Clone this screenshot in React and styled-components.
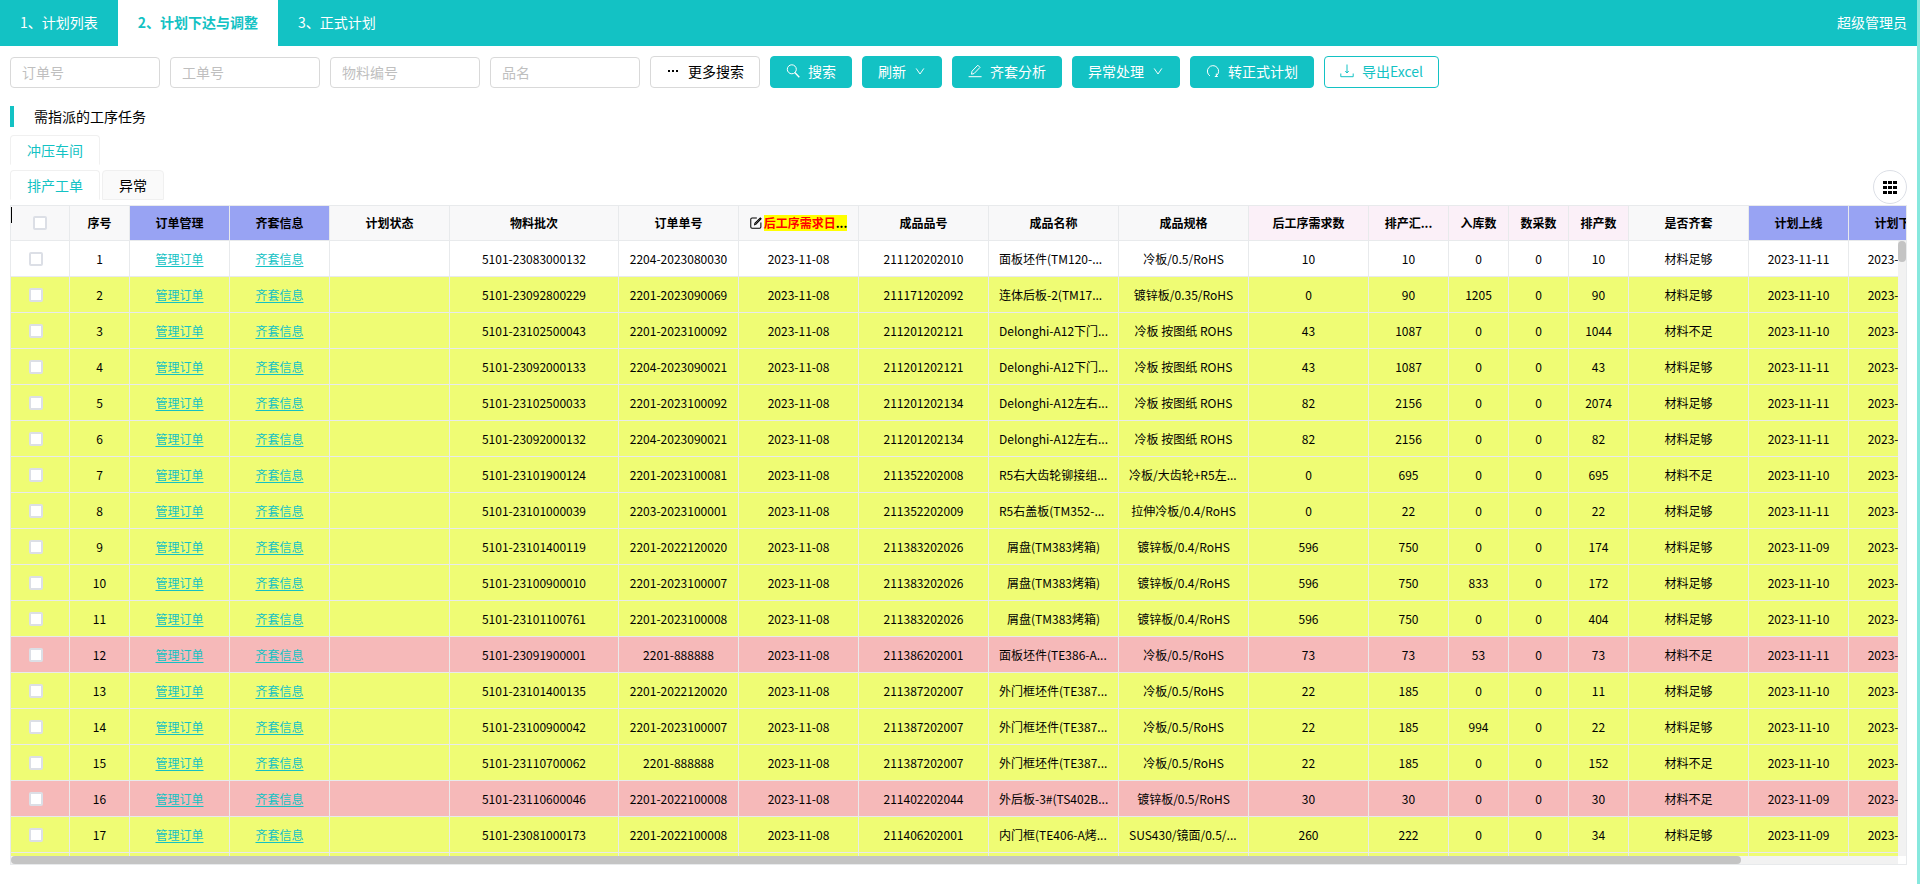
import React from 'react';
import styled, { createGlobalStyle, css } from 'styled-components';

const TEAL = '#13c2c4';
const LINE = '#e8eaec';

const GlobalStyle = createGlobalStyle`
  * { box-sizing: border-box; }
  body {
    margin: 0;
    background: #fff;
    color: #000;
    font: 14px/22px 'Noto Sans CJK SC', 'Noto Sans', sans-serif;
  }
  button, input { font: inherit; color: inherit; }
`;

const Page = styled.div`
  min-height: 100vh;
  border-right: 3px solid #87e8de;
`;

const TopBar = styled.header`
  display: flex;
  justify-content: space-between;
  align-items: center;
  height: 46px;
  padding-right: 10px;
  background: ${TEAL};
  color: #fff;
`;

const TopNav = styled.nav`
  display: flex;
  align-self: stretch;
`;

const UserName = styled.span`
  padding-bottom: 2px;
`;

const NavLink = styled.a`
  display: flex;
  align-items: center;
  padding: 0 20px 2px;
  text-decoration: none;
  color: ${(p) => (p.$active ? TEAL : '#fff')};
  background: ${(p) => (p.$active ? '#fff' : 'transparent')};
  font-weight: ${(p) => (p.$active ? 700 : 400)};
`;

const Content = styled.main`
  padding: 10px;
`;

const Toolbar = styled.form`
  display: flex;
  align-items: flex-end;
  gap: 10px;
`;

const Field = styled.input`
  width: 150px;
  height: 31px;
  padding: 0 11px 2px;
  border: 1px solid #d9d9d9;
  border-radius: 4px;
  outline: none;
  &::placeholder { color: #bfbfbf; opacity: 1; }
`;

const looks = {
  primary: css`background: ${TEAL}; border-color: ${TEAL}; color: #fff;`,
  outline: css`background: #fff; border-color: ${TEAL}; color: ${TEAL};`,
  plain: css`background: #fff; border-color: #d9d9d9; color: #000;`,
};

const Button = styled.button`
  display: flex;
  align-items: center;
  gap: 8px;
  height: 32px;
  padding: 0 15px 2px;
  border: 1px solid;
  border-radius: 4px;
  white-space: nowrap;
  ${(p) => looks[p.$look]}
`;

const Title = styled.h2`
  margin: 18px 0 8px;
  padding-left: 20px;
  border-left: 4px solid ${TEAL};
  font-size: 14px;
  line-height: 21px;
  font-weight: 400;
`;

const TabRow = styled.div`
  display: flex;
  justify-content: space-between;
  align-items: flex-start;
  height: 35px;
`;

const TabList = styled.div`
  display: flex;
  gap: 2px;
`;

const Tab = styled.button`
  height: 30px;
  padding: 0 16px;
  border: 1px solid #f0f0f0;
  border-bottom-color: ${(p) => (p.$active ? 'transparent' : '#f0f0f0')};
  border-radius: 4px 4px 0 0;
  background: ${(p) => (p.$active ? '#fff' : '#fafafa')};
  color: ${(p) => (p.$active ? TEAL : '#000')};
`;

const RoundButton = styled.button`
  display: flex;
  align-items: center;
  justify-content: center;
  width: 34px;
  height: 34px;
  padding: 0;
  border: 1px solid #dcdfe6;
  border-radius: 50%;
  background: #fff;
`;

const Grid = styled.section`
  position: relative;
  border: 1px solid ${LINE};
  font-size: 12px;
  line-height: 18px;
`;

const Caret = styled.i`
  position: absolute;
  left: 0;
  top: 1px;
  width: 1px;
  height: 16px;
  background: #000;
`;

const Viewport = styled.div`
  overflow: hidden;
`;

const BodyArea = styled.div`
  display: grid;
  grid-template-columns: minmax(0, 1fr) 8px;
  grid-template-rows: 615px 8px;
`;

const Track = styled.div`
  background: #f2f2f2;
`;

const Thumb = styled.div`
  background: #c4c4c4;
  border-radius: 4px;
  width: ${(p) => p.$w};
  height: ${(p) => p.$h};
`;

const Table = styled.table`
  width: 2058px;
  table-layout: fixed;
  border-collapse: separate;
  border-spacing: 0;
`;

const tints = { plain: '#f8f8f9', blue: '#98a3f3', pink: '#fbf0f8' };

const Th = styled.th`
  height: 35px;
  padding: 0;
  border-right: 1px solid ${LINE};
  border-bottom: 1px solid ${LINE};
  background: ${(p) => tints[p.$tint]};
  text-align: center;
  font-weight: 700;
  white-space: nowrap;
`;

const HeadLabel = styled.span`
  display: flex;
  align-items: center;
  justify-content: center;
  gap: 2px;
`;

const Marked = styled.mark`
  background: #ff0;
  color: #000;
  line-height: 16px;
`;

const RedText = styled.span`
  color: #f00;
`;

const rowColours = { white: '#fff', yellow: '#effc74', rose: '#f6b9b9' };

const Row = styled.tr`
  background: ${(p) => rowColours[p.$colour]};
`;

const Td = styled.td`
  height: 36px;
  padding: ${(p) => (p.$tick ? '0 8px 0 0' : '0')};
  padding-left: ${(p) => (p.$cut ? '10px' : '0')};
  border-right: 1px solid ${LINE};
  border-bottom: 1px solid ${LINE};
  text-align: ${(p) => (p.$cut ? 'left' : 'center')};
  white-space: nowrap;
  overflow: hidden;
`;

const Tick = styled.input`
  appearance: none;
  display: block;
  width: 14px;
  height: 14px;
  margin: 0 auto;
  border: 2px solid #dcdfe6;
  border-radius: 2px;
  background: #fff;
`;

const CellLink = styled.a`
  color: ${TEAL};
  text-decoration: underline;
  text-underline-offset: 2px;
`;

const Icon = ({ size = 14, children }) => (
  <svg width={size} height={size} viewBox="0 0 14 14" fill="none" stroke="currentColor" aria-hidden="true">
    {children}
  </svg>
);

const DotsIcon = () => (
  <Icon>
    <path d="M2 6h2v2H2zM6 6h2v2H6zM10 6h2v2h-2z" fill="currentColor" stroke="none" />
  </Icon>
);
const SearchIcon = () => (
  <Icon>
    <circle cx="5.8" cy="5.3" r="4.5" />
    <path d="M8.8 8.6l4.5 4.6" strokeWidth="1.4" />
  </Icon>
);
const DownIcon = () => (
  <Icon size={12}>
    <path d="M2.5 4l4.5 6.5L11.500 4" strokeWidth="1.1" />
  </Icon>
);
const PencilIcon = () => (
  <Icon>
    <path d="M3.500 10.200l.5-3L9.800 1.200l2.200 2.200-6 6.200zM.6 12.700h13" />
  </Icon>
);
const RedoIcon = () => (
  <Icon>
    <path d="M3.900 11.900A5.600 5.600 0 1 1 10.400 11.700M10.300 9.600v2.700M8.800 12.500h3" />
  </Icon>
);
const DownloadIcon = () => (
  <Icon>
    <path d="M7 .5v8M5.300 7L7 9l1.700-2M.8 9.500v3.200h12.400V9.500" />
  </Icon>
);
const EditIcon = () => (
  <Icon size={12}>
    <path d="M8 1.2H2.4Q.9 1.2.9 2.7v9Q.9 13.1 2.4 13.1h8.8q1.5 0 1.5-1.4V6.5M5.4 9l.3-1.6L12 1l1 1-6.2 6.6z" strokeWidth="1.2" />
  </Icon>
);
const GridIcon = () => (
  <Icon size={14}>
    <path
      d="M0 1h4v3H0zM5 1h4v3H5zM10 1h4v3h-4zM0 6h4v3H0zM5 6h4v3H5zM10 6h4v3h-4zM0 11h4v3H0zM5 11h4v3H5zM10 11h4v3h-4z"
      fill="#000"
      stroke="none"
    />
  </Icon>
);

const columns = [
  { width: 59, tick: true },
  { width: 60, label: '序号' },
  { width: 100, label: '订单管理', tint: 'blue' },
  { width: 100, label: '齐套信息', tint: 'blue' },
  { width: 120, label: '计划状态' },
  { width: 169, label: '物料批次' },
  { width: 120, label: '订单单号' },
  { width: 120, marked: '后工序需求日' },
  { width: 130, label: '成品品号' },
  { width: 130, label: '成品名称' },
  { width: 130, label: '成品规格' },
  { width: 120, label: '后工序需求数', tint: 'pink' },
  { width: 80, label: '排产汇...', tint: 'pink' },
  { width: 60, label: '入库数', tint: 'pink' },
  { width: 60, label: '数采数', tint: 'pink' },
  { width: 60, label: '排产数', tint: 'pink' },
  { width: 120, label: '是否齐套' },
  { width: 100, label: '计划上线', tint: 'blue' },
  { width: 100, label: '计划下线', tint: 'blue' },
  { width: 120, label: '' },
];

// colour, batch, order no, item no, name, spec, demand, total, stocked, collected, scheduled, kit state, start day
const rows = [
  ['white', '5101-23083000132', '2204-2023080030', '211120202010', '面板坯件(TM120-...', '冷板/0.5/RoHS', 10, 10, 0, 0, 10, '材料足够', '11'],
  ['yellow', '5101-23092800229', '2201-2023090069', '211171202092', '连体后板-2(TM17...', '镀锌板/0.35/RoHS', 0, 90, 1205, 0, 90, '材料足够', '10'],
  ['yellow', '5101-23102500043', '2201-2023100092', '211201202121', 'Delonghi-A12下门...', '冷板 按图纸 ROHS', 43, 1087, 0, 0, 1044, '材料不足', '10'],
  ['yellow', '5101-23092000133', '2204-2023090021', '211201202121', 'Delonghi-A12下门...', '冷板 按图纸 ROHS', 43, 1087, 0, 0, 43, '材料足够', '11'],
  ['yellow', '5101-23102500033', '2201-2023100092', '211201202134', 'Delonghi-A12左右...', '冷板 按图纸 ROHS', 82, 2156, 0, 0, 2074, '材料足够', '11'],
  ['yellow', '5101-23092000132', '2204-2023090021', '211201202134', 'Delonghi-A12左右...', '冷板 按图纸 ROHS', 82, 2156, 0, 0, 82, '材料足够', '11'],
  ['yellow', '5101-23101900124', '2201-2023100081', '211352202008', 'R5右大齿轮铆接组...', '冷板/大齿轮+R5左...', 0, 695, 0, 0, 695, '材料不足', '10'],
  ['yellow', '5101-23101000039', '2203-2023100001', '211352202009', 'R5右盖板(TM352-...', '拉伸冷板/0.4/RoHS', 0, 22, 0, 0, 22, '材料足够', '11'],
  ['yellow', '5101-23101400119', '2201-2022120020', '211383202026', '屑盘(TM383烤箱)', '镀锌板/0.4/RoHS', 596, 750, 0, 0, 174, '材料足够', '09'],
  ['yellow', '5101-23100900010', '2201-2023100007', '211383202026', '屑盘(TM383烤箱)', '镀锌板/0.4/RoHS', 596, 750, 833, 0, 172, '材料足够', '10'],
  ['yellow', '5101-23101100761', '2201-2023100008', '211383202026', '屑盘(TM383烤箱)', '镀锌板/0.4/RoHS', 596, 750, 0, 0, 404, '材料足够', '10'],
  ['rose', '5101-23091900001', '2201-888888', '211386202001', '面板坯件(TE386-A...', '冷板/0.5/RoHS', 73, 73, 53, 0, 73, '材料不足', '11'],
  ['yellow', '5101-23101400135', '2201-2022120020', '211387202007', '外门框坯件(TE387...', '冷板/0.5/RoHS', 22, 185, 0, 0, 11, '材料足够', '10'],
  ['yellow', '5101-23100900042', '2201-2023100007', '211387202007', '外门框坯件(TE387...', '冷板/0.5/RoHS', 22, 185, 994, 0, 22, '材料足够', '10'],
  ['yellow', '5101-23110700062', '2201-888888', '211387202007', '外门框坯件(TE387...', '冷板/0.5/RoHS', 22, 185, 0, 0, 152, '材料不足', '10'],
  ['rose', '5101-23110600046', '2201-2022100008', '211402202044', '外后板-3#(TS402B...', '镀锌板/0.5/RoHS', 30, 30, 0, 0, 30, '材料不足', '09'],
  ['yellow', '5101-23081000173', '2201-2022100008', '211406202001', '内门框(TE406-A烤...', 'SUS430/镜面/0.5/...', 260, 222, 0, 0, 34, '材料足够', '09'],
];

const Columns = () => (
  <colgroup>
    {columns.map((c, i) => (
      <col key={i} width={c.width} />
    ))}
  </colgroup>
);

const TextCell = ({ children }) => {
  const cut = typeof children === 'string' && children.endsWith('...');
  return <Td $cut={cut}>{children}</Td>;
};

const TaskRow = ({ index, data }) => {
  const [colour, batch, order, item, name, spec, ...rest] = data;
  const counts = rest.slice(0, 5);
  const [kit, day] = rest.slice(5);
  return (
    <Row $colour={colour}>
      <Td $tick>
        <Tick type="checkbox" aria-label={`选择 ${index}`} />
      </Td>
      <Td>{index}</Td>
      <Td><CellLink href="#order">管理订单</CellLink></Td>
      <Td><CellLink href="#kit">齐套信息</CellLink></Td>
      <Td />
      <Td>{batch}</Td>
      <Td>{order}</Td>
      <Td>2023-11-08</Td>
      <Td>{item}</Td>
      <TextCell>{name}</TextCell>
      <TextCell>{spec}</TextCell>
      {counts.map((n, i) => (
        <Td key={i}>{n}</Td>
      ))}
      <Td>{kit}</Td>
      <Td>2023-11-{day}</Td>
      <Td>2023-11-{day}</Td>
      <Td />
    </Row>
  );
};

export default function App() {
  return (
    <Page>
      <GlobalStyle />
      <TopBar>
        <TopNav>
          <NavLink href="#list">1、计划列表</NavLink>
          <NavLink href="#adjust" $active>2、计划下达与调整</NavLink>
          <NavLink href="#formal">3、正式计划</NavLink>
        </TopNav>
        <UserName>超级管理员</UserName>
      </TopBar>
      <Content>
        <Toolbar onSubmit={(e) => e.preventDefault()}>
          {['订单号', '工单号', '物料编号', '品名'].map((t) => (
            <Field key={t} placeholder={t} aria-label={t} />
          ))}
          <Button type="button" $look="plain"><DotsIcon />更多搜索</Button>
          <Button type="submit" $look="primary"><SearchIcon />搜索</Button>
          <Button type="button" $look="primary">刷新<DownIcon /></Button>
          <Button type="button" $look="primary"><PencilIcon />齐套分析</Button>
          <Button type="button" $look="primary">异常处理<DownIcon /></Button>
          <Button type="button" $look="primary"><RedoIcon />转正式计划</Button>
          <Button type="button" $look="outline"><DownloadIcon />导出Excel</Button>
        </Toolbar>
        <Title>需指派的工序任务</Title>
        <TabRow>
          <TabList role="tablist">
            <Tab type="button" role="tab" aria-selected="true" $active>冲压车间</Tab>
          </TabList>
        </TabRow>
        <TabRow>
          <TabList role="tablist">
            <Tab type="button" role="tab" aria-selected="true" $active>排产工单</Tab>
            <Tab type="button" role="tab" aria-selected="false">异常</Tab>
          </TabList>
          <RoundButton type="button" aria-label="列设置"><GridIcon /></RoundButton>
        </TabRow>
        <Grid>
          <Viewport>
            <Table>
              <Columns />
              <thead>
                <tr>
                  {columns.map((c, i) => (
                    <Th key={i} $tint={c.tint || 'plain'}>
                      {c.tick && <Tick type="checkbox" aria-label="全选" />}
                      {c.label}
                      {c.marked && (
                        <HeadLabel>
                          <EditIcon />
                          <Marked><RedText>{c.marked}</RedText>...</Marked>
                        </HeadLabel>
                      )}
                    </Th>
                  ))}
                </tr>
              </thead>
            </Table>
          </Viewport>
          <BodyArea>
            <Viewport>
              <Table>
                <Columns />
                <tbody>
                  {rows.map((data, i) => (
                    <TaskRow key={data[1]} index={i + 1} data={data} />
                  ))}
                  <Row $colour="yellow">
                    {columns.map((c, i) => (
                      <Td key={i} />
                    ))}
                  </Row>
                </tbody>
              </Table>
            </Viewport>
            <Track><Thumb $w="8px" $h="21px" /></Track>
            <Track><Thumb $w="calc(100% - 157px)" $h="8px" /></Track>
          </BodyArea>
          <Caret />
        </Grid>
      </Content>
    </Page>
  );
}
